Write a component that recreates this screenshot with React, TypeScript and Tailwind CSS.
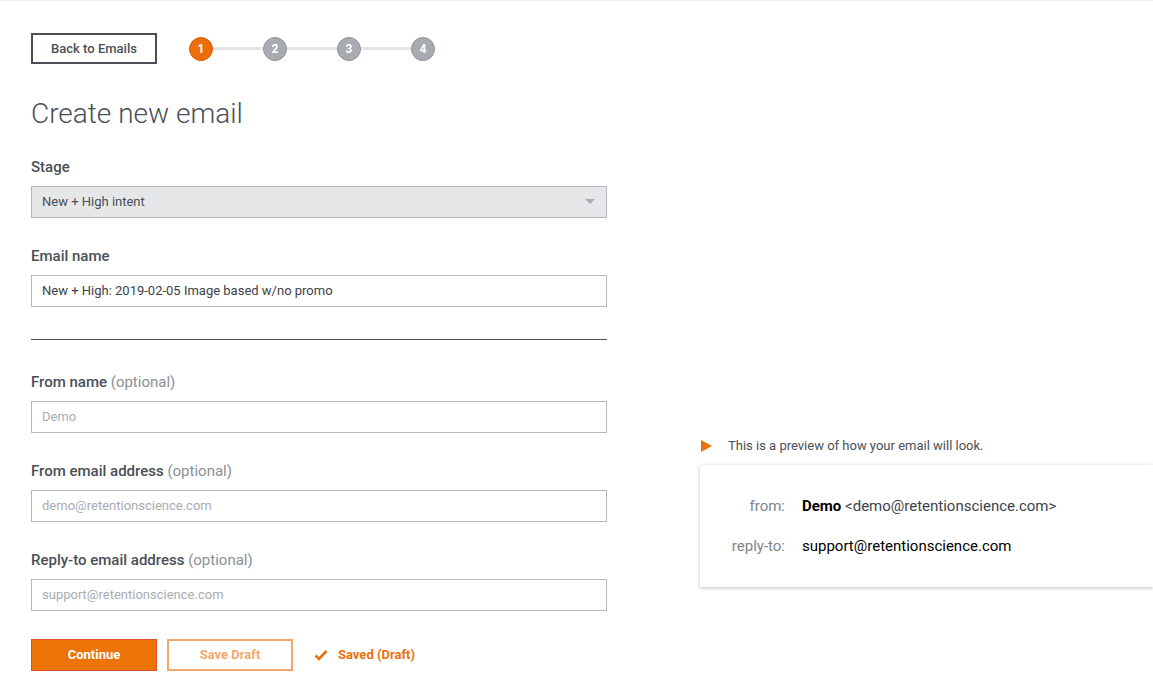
const font = { fontFamily: "Roboto, 'Noto Sans', sans-serif" };

function Steps() {
  const steps = [1, 2, 3, 4];
  return (
    <div className="flex items-center ml-[32px]">
      {steps.map((n, i) => (
        <div key={n} className="flex items-center">
          {i > 0 && <div className="w-[50px] h-[3px] bg-[#e4e5e7]" />}
          <div
            className={
              n === 1
                ? "w-[24px] h-[24px] rounded-full bg-[#ec6e0b] border border-[#d85f08] text-white text-[12px] font-bold flex items-center justify-center"
                : "w-[24px] h-[24px] rounded-full bg-[#a8abb0] border border-[#8f9399] text-white text-[12px] font-bold flex items-center justify-center"
            }
          >
            {n}
          </div>
        </div>
      ))}
    </div>
  );
}

function Label({ text, optional }: { text: string; optional?: boolean }) {
  return (
    <div className="text-[15px] leading-[20px] font-medium text-[#4a4f57]">
      {text}
      {optional && <span className="font-normal text-[#8b8f95]"> (optional)</span>}
    </div>
  );
}

function Field({ value, placeholder }: { value?: string; placeholder?: string }) {
  return (
    <div className="mt-[9px] h-[32px] border border-[#b4b7bc] bg-white flex items-center px-[10px] text-[13px]">
      {value ? (
        <span className="text-[#3d4249]">{value}</span>
      ) : (
        <span className="text-[#a9acb1]">{placeholder}</span>
      )}
    </div>
  );
}

export default function App() {
  return (
    <div className="min-h-[684px] bg-white border-t border-[#f0f0f0]" style={font}>
      <div className="flex">
        <div className="w-[576px] ml-[31px] pt-[32px] shrink-0">
          <div className="flex items-center">
            <button className="w-[126px] h-[31px] border-2 border-[#4a4f57] text-[13px] font-medium text-[#4a4f57] flex items-center justify-center">
              Back to Emails
            </button>
            <Steps />
          </div>

          <h1 className="mt-[33px] text-[28px] leading-[34px] font-light text-[#4a4f57]">
            Create new email
          </h1>

          <div className="mt-[26px]">
            <Label text="Stage" />
            <div className="mt-[9px] h-[32px] border border-[#b4b7bc] bg-[#e6e7e9] flex items-center justify-between px-[10px] text-[13px] text-[#4a4f57]">
              <span>New + High intent</span>
              <svg width="10" height="6" viewBox="0 0 10 6" className="mr-[1px]">
                <path d="M0 0 L10 0 L5 5 Z" fill="#a9acb1" />
              </svg>
            </div>
          </div>

          <div className="mt-[28px]">
            <Label text="Email name" />
            <Field value="New + High: 2019-02-05 Image based w/no promo" />
          </div>

          <div className="mt-[32px] h-[1px] bg-[#4a4f57]" />

          <div className="mt-[32px]">
            <Label text="From name" optional />
            <Field placeholder="Demo" />
          </div>

          <div className="mt-[28px]">
            <Label text="From email address" optional />
            <Field placeholder="demo@retentionscience.com" />
          </div>

          <div className="mt-[28px]">
            <Label text="Reply-to email address" optional />
            <Field placeholder="support@retentionscience.com" />
          </div>

          <div className="mt-[28px] flex items-center">
            <button className="w-[126px] h-[32px] bg-[#eb7307] border border-[#d9532a] text-white text-[13px] font-bold">
              Continue
            </button>
            <button className="ml-[10px] w-[126px] h-[32px] bg-white border-2 border-[#f3a86a] text-[#f3a86a] text-[13px] font-bold">
              Save Draft
            </button>
            <div className="ml-[21px] flex items-center text-[13px] font-bold text-[#ec700c]">
              <svg width="14" height="12" viewBox="0 0 14 12" className="mr-[10px]">
                <path d="M1.5 6.5 L5 10 L12.5 2" fill="none" stroke="#ec700c" strokeWidth="2.6" />
              </svg>
              Saved (Draft)
            </div>
          </div>
        </div>

        <div className="ml-[93px] flex-1 pt-[436px]">
          <div className="flex items-center h-[18px]">
            <svg width="11" height="12" viewBox="0 0 11 12" className="ml-[1px]">
              <path d="M0 0 L11 6 L0 12 Z" fill="#ec700c" />
            </svg>
            <span className="ml-[16px] text-[13px] text-[#4a4f57]">
              This is a preview of how your email will look.
            </span>
          </div>
          <div className="mt-[10px] h-[122px] bg-white shadow-[0_1px_4px_rgba(0,0,0,0.25)] pt-[31px] text-[15px]">
            <div className="flex items-center h-[20px]">
              <span className="w-[85px] text-right text-[#80858c]">from:</span>
              <span className="ml-[17px] text-black">
                <span className="font-bold">Demo</span>{" "}
                <span className="text-[#3d4249]">&lt;demo@retentionscience.com&gt;</span>
              </span>
            </div>
            <div className="flex items-center h-[20px] mt-[20px]">
              <span className="w-[85px] text-right text-[#80858c]">reply-to:</span>
              <span className="ml-[17px] text-black">support@retentionscience.com</span>
            </div>
          </div>
        </div>
      </div>
    </div>
  );
}
